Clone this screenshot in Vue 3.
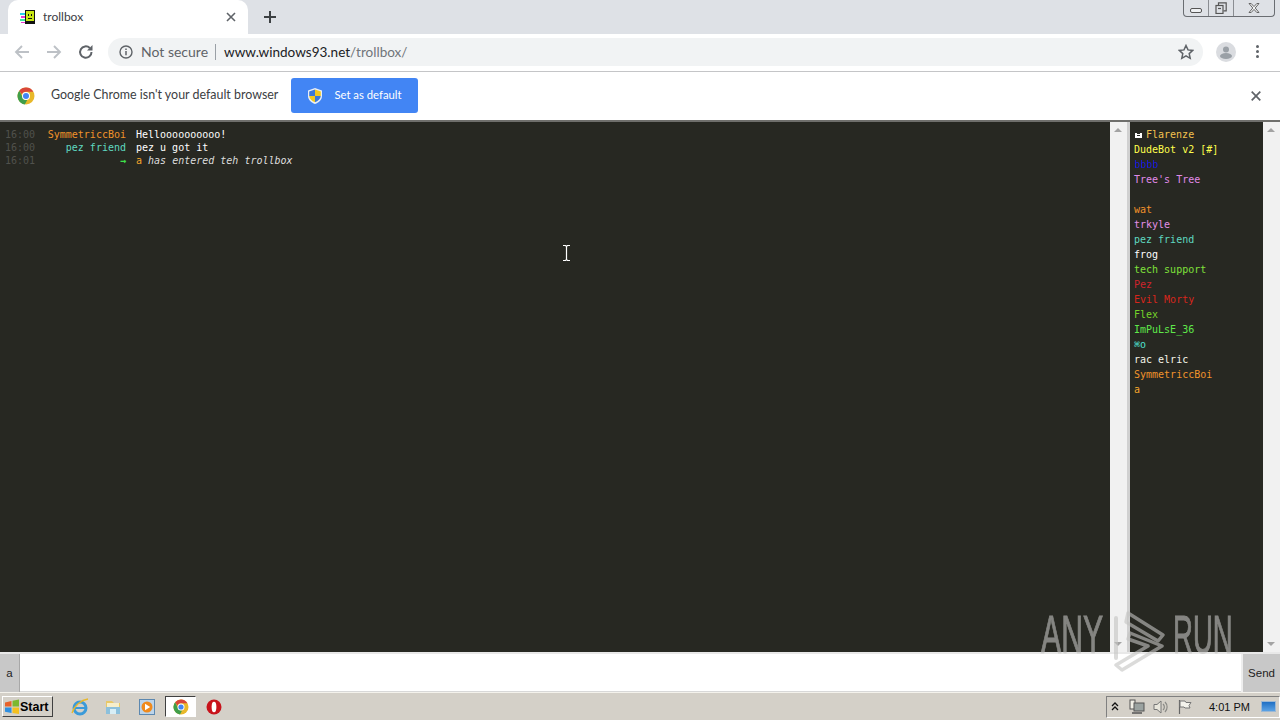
<script setup>
const rows = [
  { t: '16:00', n: 'SymmetriccBoi', c: '#f0932b', m: 'Helloooooooooo!' },
  { t: '16:00', n: 'pez friend', c: '#5fd8c0', m: 'pez u got it' },
]
const users = [
  { n: 'Flarenze', c: '#f2c14e', crown: true },
  { n: 'DudeBot v2 [#]', c: '#ffff4d' },
  { n: 'bbbb', c: '#1c1ce8', smudge: true },
  { n: "Tree's Tree", c: '#e08ae8' },
  { n: '\u00a0', c: '#fff' },
  { n: 'wat', c: '#f0902a' },
  { n: 'trkyle', c: '#e38fe6' },
  { n: 'pez friend', c: '#5fd8c0' },
  { n: 'frog', c: '#ffffff' },
  { n: 'tech support', c: '#7fe03a' },
  { n: 'Pez', c: '#d0242c' },
  { n: 'Evil Morty', c: '#d8261c' },
  { n: 'Flex', c: '#76d42a' },
  { n: 'ImPuLsE_36', c: '#5fe84a' },
  { n: '⌘o', c: '#4fe0d0' },
  { n: 'rac elric', c: '#f4f4e8' },
  { n: 'SymmetriccBoi', c: '#f0932b' },
  { n: 'a', c: '#f2a52c' },
]
</script>

<template>
  <div class="page">
    <div class="tabstrip">
      <div class="tab">
        <svg class="favicon" viewBox="0 0 16 16" width="16" height="16">
          <rect x="5" y="1" width="10" height="14" fill="#111" />
          <rect x="6" y="2" width="8" height="10" fill="#c8e614" />
          <rect x="8" y="5" width="1" height="2" fill="#111" />
          <rect x="11" y="5" width="1" height="2" fill="#111" />
          <rect x="8" y="9" width="4" height="1" fill="#111" />
          <rect x="0" y="4" width="5" height="2" fill="#2ad4e8" />
          <rect x="1" y="7" width="4" height="2" fill="#e83ad0" />
          <rect x="0" y="10" width="5" height="2" fill="#3ae8a0" />
          <rect x="1" y="13" width="4" height="1" fill="#e83ad0" />
        </svg>
        <span class="tab-title">trollbox</span>
        <svg class="tab-close" viewBox="0 0 10 10" width="10" height="10">
          <path d="M1 1 9 9M9 1 1 9" stroke="#5f6368" stroke-width="1.6" />
        </svg>
      </div>
      <svg class="new-tab" viewBox="0 0 12 12" width="12" height="12">
        <path d="M6 0v12M0 6h12" stroke="#3c4043" stroke-width="2" />
      </svg>
      <div class="win-controls">
        <div class="win-btn wb-min"><span class="min-bar"></span></div>
        <div class="win-btn wb-max">
          <svg viewBox="0 0 12 12" width="12" height="12" fill="none" stroke="#555" stroke-width="1.2">
            <rect x="1" y="3.5" width="7" height="8" fill="#dee1e6" />
            <path d="M3.5 3V.8h7.7v8H8.5" />
            <path d="M3 6.5h3" />
          </svg>
        </div>
        <div class="win-btn wb-close">
          <svg viewBox="0 0 12 10" width="12" height="10" fill="#f2f3f4" stroke="#666" stroke-width="1">
            <path d="M1 .5h2.200L6 3.600 8.800.5H11L7.200 5l3.800 4.500H8.800L6 6.400 3.200 9.500H1L4.800 5z" />
          </svg>
        </div>
      </div>
    </div>

    <div class="toolbar">
      <svg class="nav nav-back" viewBox="0 0 16 16" width="16" height="16">
        <path d="M15 8H2M8 2 2 8l6 6" fill="none" stroke="#bdc1c6" stroke-width="1.9" />
      </svg>
      <svg class="nav nav-fwd" viewBox="0 0 16 16" width="16" height="16">
        <path d="M1 8h13M8 2l6 6-6 6" fill="none" stroke="#bdc1c6" stroke-width="1.9" />
      </svg>
      <svg class="nav nav-reload" viewBox="0 0 16 16" width="16" height="16">
        <path d="M13.500 8a5.700 5.700 0 1 1-1.700-4" fill="none" stroke="#5f6368" stroke-width="2" />
        <path d="M14.500 1v5.500H9z" fill="#5f6368" />
      </svg>
      <div class="omnibox">
        <svg class="info" viewBox="0 0 14 14" width="14" height="14">
          <circle cx="7" cy="7" r="6" fill="none" stroke="#5f6368" stroke-width="1.400" />
          <path d="M7 6v4.200M7 3.500v1.400" stroke="#5f6368" stroke-width="1.500" />
        </svg>
        <span class="not-secure">Not secure</span>
        <span class="sep"></span>
        <span class="url">www.windows93.net<span class="url-dim">/trollbox/</span></span>
        <svg class="star" viewBox="0 0 16 16" width="16" height="16">
          <path d="M8 1.500l2 4.400 4.800.5-3.600 3.200 1 4.700L8 11.900l-4.200 2.400 1-4.700L1.200 6.400 6 5.900z" fill="none" stroke="#5f6368" stroke-width="1.500" />
        </svg>
      </div>
      <svg class="avatar" viewBox="0 0 20 20" width="20" height="20">
        <circle cx="10" cy="10" r="10" fill="#dadce0" />
        <circle cx="10" cy="7.500" r="3" fill="#9aa0a6" />
        <ellipse cx="10" cy="14" rx="6" ry="3" fill="#9aa0a6" />
      </svg>
      <div class="kebab"><i></i><i></i><i></i></div>
    </div>

    <div class="infobar">
      <svg class="chrome-logo" viewBox="0 0 18 18" width="18" height="18">
        <circle cx="9" cy="9" r="8.500" fill="#e8b82a" />
        <path d="M9 .5a8.500 8.500 0 0 1 7.400 4.300H9A4.200 4.200 0 0 0 5 7.600L2.300 3.800A8.500 8.500 0 0 1 9 .5z" fill="#d9463a" />
        <path d="M2.300 3.800 5.500 10a4.200 4.200 0 0 0 4.700 2.900L7.800 17.400A8.500 8.500 0 0 1 2.300 3.800z" fill="#3f9e4a" />
        <circle cx="9" cy="9" r="4" fill="#fff" />
        <circle cx="9" cy="9" r="3" fill="#4285f4" />
      </svg>
      <span class="info-text">Google Chrome isn't your default browser</span>
      <button class="default-btn">
        <svg viewBox="0 0 14 16" width="14" height="16">
          <path d="M7 0 14 2.500V8c0 4-3.500 6.700-7 8-3.500-1.300-7-4-7-8V2.500z" fill="#e8eef8" />
          <path d="M7 1.500 1.200 3.500V8H7z" fill="#3b78d8" />
          <path d="M7 1.500 12.800 3.500V8H7z" fill="#f2c81e" />
          <path d="M1.200 8H7v6.300C4 13 1.400 11 1.200 8z" fill="#f2c81e" />
          <path d="M12.800 8H7v6.300c3-1.300 5.600-3.300 5.800-6.300z" fill="#3b78d8" />
        </svg>
        <span class="btn-label">Set as default</span>
      </button>
      <svg class="info-close" viewBox="0 0 10 10" width="10" height="10">
        <path d="M.7.7l8.600 8.600M9.300.7.7 9.300" stroke="#5f6368" stroke-width="1.700" />
      </svg>
    </div>

    <div class="chat">
      <div class="messages">
        <div v-for="(r, i) in rows" :key="i" class="row">
          <span class="time">{{ r.t }}</span>
          <span class="nick" :style="{ color: r.c }">{{ r.n }}</span>
          <span class="msg">{{ r.m }}</span>
        </div>
        <div class="row">
          <span class="time">16:01</span>
          <span class="nick arrow">→</span>
          <span class="msg"><span class="who">a</span> <em>has entered teh trollbox</em></span>
        </div>
      </div>
      <div class="scrollbar">
        <span class="arrow-up"></span>
        <span class="arrow-down"></span>
      </div>
      <div class="users">
        <div v-for="(u, i) in users" :key="i" class="user" :style="{ color: u.c }">
          <svg v-if="u.crown" class="crown" viewBox="0 0 7 6" width="7" height="6">
            <path d="M0 1h2v1h3V1h2v5H0z" fill="#fff" />
            <rect x="2" y="3" width="3" height="1" fill="#272822" />
          </svg>
          <span :class="{ smudge: u.smudge }">{{ u.n }}</span>
        </div>
      </div>
      <div class="scrollbar">
        <span class="arrow-up"></span>
        <span class="arrow-down"></span>
      </div>
    </div>

    <div class="inputbar">
      <div class="me">a</div>
      <div class="field"></div>
      <div class="send">Send</div>
    </div>

    <div class="taskbar">
      <div class="start">
        <svg viewBox="0 0 16 16" width="16" height="16">
          <path d="M1 3.500 7.500 2v5.500H1z" fill="#e8622a" />
          <path d="M8.500 1.800 15 .5v7H8.500z" fill="#7cb82f" />
          <path d="M1 8.500h6.500V14L1 12.800z" fill="#2f8fe0" />
          <path d="M8.500 8.500H15v6.500l-6.500-1z" fill="#f4c01e" />
        </svg>
        <span>Start</span>
      </div>
      <svg class="tb-icon tb-ie" viewBox="0 0 18 18" width="18" height="18">
        <circle cx="9" cy="10" r="6" fill="none" stroke="#3a9ad9" stroke-width="3" />
        <path d="M4 10h10" stroke="#3a9ad9" stroke-width="2" />
        <path d="M1 15C3 8 10 2 17 1" fill="none" stroke="#e8b82a" stroke-width="1.300" />
      </svg>
      <svg class="tb-icon tb-folder" viewBox="0 0 18 18" width="18" height="18">
        <path d="M2 3h6l2 2h6v11H2z" fill="#e8c868" />
        <rect x="3" y="5" width="12" height="5" fill="#f6eecb" />
        <path d="M2 9h14v7H2z" fill="#8cc0dc" />
        <rect x="6" y="11" width="6" height="5" fill="#d8eef6" />
      </svg>
      <svg class="tb-icon tb-media" viewBox="0 0 16 16" width="16" height="16">
        <rect x=".5" y=".5" width="15" height="15" fill="#bcd4ea" stroke="#5c88b0" />
        <circle cx="8" cy="8" r="5.500" fill="#f08a1c" />
        <path d="M6 4.800 11.200 8 6 11.200z" fill="#fff" />
      </svg>
      <div class="tb-active">
        <svg viewBox="0 0 16 16" width="16" height="16">
          <circle cx="8" cy="8" r="7.500" fill="#e8b82a" />
          <path d="M8 .5a7.500 7.500 0 0 1 6.500 3.800H8A3.700 3.700 0 0 0 4.500 6.700L2.100 3.300A7.500 7.500 0 0 1 8 .5z" fill="#d9463a" />
          <path d="M2.100 3.300 4.900 8.800a3.700 3.700 0 0 0 4.200 2.600L7 15.400A7.500 7.500 0 0 1 2.100 3.300z" fill="#3f9e4a" />
          <circle cx="8" cy="8" r="3.500" fill="#fff" />
          <circle cx="8" cy="8" r="2.600" fill="#4285f4" />
        </svg>
      </div>
      <svg class="tb-icon tb-opera" viewBox="0 0 16 16" width="16" height="16">
        <circle cx="8" cy="8" r="7.500" fill="#c8131b" />
        <ellipse cx="8" cy="8" rx="2.400" ry="5.300" fill="#fff" />
      </svg>
      <div class="tray">
        <svg viewBox="0 0 8 9" width="8" height="9">
          <path d="M1 4 4 1l3 3M1 8l3-3 3 3" fill="none" stroke="#111" stroke-width="1.300" />
        </svg>
        <svg class="tray-net" viewBox="0 0 16 16" width="16" height="16">
          <rect x="1" y="1" width="5" height="9" fill="#f0efe6" stroke="#555" />
          <rect x="5" y="4" width="10" height="8" fill="#9aa2a0" stroke="#555" />
          <path d="M3 14h10" stroke="#555" stroke-width="1.500" />
        </svg>
        <svg class="tray-vol" viewBox="0 0 16 16" width="16" height="16">
          <path d="M1 5.500h3L8 2v12l-4-3.500H1z" fill="#e8e6dc" stroke="#777" />
          <path d="M10 5a4 4 0 0 1 0 6M12 3a7 7 0 0 1 0 10" fill="none" stroke="#8a8a86" stroke-width="1.200" />
        </svg>
        <svg class="tray-flag" viewBox="0 0 16 16" width="16" height="16">
          <path d="M2.500 1v14" stroke="#666" stroke-width="1.200" />
          <path d="M3 2h5l1 1.500h5l-2 3 1 2.500H8L7 8H3z" fill="#f4f3ec" stroke="#777" />
        </svg>
        <span class="clock">4:01 PM</span>
        <div class="show-desktop"></div>
      </div>
    </div>

    <div class="watermark">
      <span class="wm-any">ANY</span>
      <svg class="wm-logo" viewBox="0 0 60 66" width="60" height="66" fill="none" stroke="#c4c4c2" stroke-linejoin="round" stroke-linecap="round">
        <path d="M20 5 55 27 50 33 18 14z" stroke-width="3.500" />
        <path d="M22 25 54 38 14 62 8 57 40 38 20 31z" stroke-width="3.500" />
        <path d="M8 10V50" stroke-width="4" />
      </svg>
      <span class="wm-run">RUN</span>
    </div>

    <svg class="ibeam" viewBox="0 0 7 16" width="7" height="16">
      <path d="M0 .5h2.500L3.500 1.500 4.500.5H7M3.500 1.500v13M0 15.500h2.500l1-1 1 1H7" fill="none" stroke="#fff" stroke-width="1.200" />
    </svg>
  </div>
</template>

<style scoped>
.page {
  position: relative;
  width: 1280px;
  height: 720px;
  overflow: hidden;
  display: flex;
  flex-direction: column;
  background: #fff;
  font-family: "Lato", "Open Sans", "Liberation Sans", sans-serif;
}
.tabstrip {
  height: 34px;
  flex: none;
  display: flex;
  background: #dee1e6;
}
.tab {
  width: 240px;
  margin-left: 8px;
  background: #fff;
  border-top-right-radius: 10px;
  border-top-left-radius: 10px;
  display: flex;
  align-items: center;
  padding: 0 0 1px 12px;
  box-sizing: border-box;
}
.tab-title {
  margin-left: 7px;
  font-size: 12px;
  color: #3c4043;
  flex: 1;
}
.tab-close { margin-right: 12px; }
.new-tab { margin: 11px 0 0 16px; }
.win-controls {
  margin-left: auto;
  margin-right: 5px;
  height: 16px;
  display: flex;
  border: 1px solid #6a6d72;
  border-top: none;
  border-radius: 0 0 4px 4px;
}
.win-btn {
  display: flex;
  align-items: center;
  justify-content: center;
  box-sizing: border-box;
}
.wb-min { width: 25px; border-right: 1px solid #8a8d92; }
.wb-max { width: 25px; border-right: 1px solid #8a8d92; }
.wb-close { width: 40px; }
.min-bar {
  width: 12px;
  height: 5px;
  box-sizing: border-box;
  border: 1px solid #555;
  border-radius: 2px;
  background: #eef0f2;
  margin-top: 5px;
}
.toolbar {
  height: 35px;
  padding-bottom: 2px;
  flex: none;
  display: flex;
  align-items: center;
  background: #fff;
  border-bottom: 1px solid #c4c5c7;
}
.nav { flex: none; }
.nav-back { margin-left: 14px; }
.nav-fwd { margin-left: 16px; }
.nav-reload { margin-left: 16px; }
.omnibox {
  margin-left: 14px;
  width: 1095px;
  height: 28px;
  box-sizing: border-box;
  border-radius: 14px;
  background: #f1f3f4;
  display: flex;
  align-items: center;
  padding-left: 11px;
  padding-right: 9px;
}
.not-secure {
  margin-left: 8px;
  font-size: 14px;
  color: #5f6368;
}
.sep {
  width: 1px;
  height: 16px;
  background: #9aa0a6;
  margin: 0 8px 0 7px;
}
.url {
  font-size: 13.550px;
  color: #202124;
  flex: 1;
}
.url-dim { color: #70757a; }
.avatar { margin-left: 13px; flex: none; }
.kebab {
  margin-left: 20px;
  display: flex;
  flex-direction: column;
  gap: 2px;
}
.kebab i {
  display: block;
  width: 3px;
  height: 3px;
  border-radius: 50%;
  background: #5f6368;
}
.infobar {
  height: 47px;
  padding: 0 0 1px 17px;
  flex: none;
  display: flex;
  align-items: center;
  background: #fff;
}
.info-text {
  margin: 0 0 2px 16px;
  font-size: 12.450px;
  color: #3c4043;
}
.default-btn {
  margin-left: 13px;
  width: 127px;
  height: 35px;
  border: none;
  border-radius: 3px;
  background: #4285f4;
  color: #fff;
  font-family: inherit;
  font-size: 11.300px;
  display: flex;
  align-items: center;
  gap: 12px;
  padding: 0 0 0 17px;
}
.btn-label { margin-bottom: 2px; }
.info-close { margin-left: auto; margin-right: 19px; }
.chat {
  flex: 1;
  min-height: 0;
  display: flex;
  background: #272822;
  border-top: 2px solid #6f6f6c;
  font-family: "DejaVu Sans Mono", "Liberation Mono", monospace;
  font-size: 10px;
}
.messages {
  flex: 1;
  padding: 6px 0 0 5px;
}
.row {
  display: flex;
  height: 13px;
  line-height: 13px;
  white-space: pre;
}
.time { width: 30px; color: #50514c; }
.nick { width: 91px; text-align: right; }
.arrow { color: #3ee04a; font-weight: 700; }
.msg { margin-left: 10px; color: #fff; }
.who { color: #f2a52c; }
.msg em { color: #ddd; font-style: italic; }
.scrollbar {
  width: 17px;
  flex: none;
  background: #f1f1f1;
  position: relative;
}
.arrow-up, .arrow-down {
  position: absolute;
  left: 4px;
  width: 0;
  height: 0;
  border-left: 4px solid transparent;
  border-right: 4px solid transparent;
}
.arrow-up { top: 6px; border-bottom: 4px solid #a3a3a3; }
.arrow-down { bottom: 6px; border-top: 4px solid #a3a3a3; }
.users {
  width: 136px;
  flex: none;
  box-sizing: border-box;
  padding: 5px 0 0 4px;
  border-left: 3px solid #d0d0d0;
}
.user {
  height: 15px;
  line-height: 15px;
  white-space: pre;
  display: flex;
  align-items: center;
  gap: 4px;
}
.crown { margin-left: 1px; }
.smudge { filter: blur(.6px); }
.inputbar {
  height: 40px;
  flex: none;
  display: flex;
  background: #fff;
  border-top: 2px solid #e8e8e8;
  box-sizing: border-box;
}
.me {
  width: 20px;
  flex: none;
  background: #c8c8c8;
  border-right: 1px solid #a8a8a8;
  box-sizing: border-box;
  display: flex;
  align-items: center;
  justify-content: center;
  padding-bottom: 1px;
  font: 11.500px "Liberation Sans", sans-serif;
  color: #222;
}
.field { flex: 1; border-bottom: 1px solid #d8d8d8; }
.send {
  width: 39px;
  flex: none;
  background: #c8c8c8;
  border-left: 2px solid #eee;
  box-sizing: border-box;
  display: flex;
  align-items: center;
  justify-content: center;
  padding-bottom: 1px;
  font: 11.500px "Liberation Sans", sans-serif;
  color: #222;
}
.taskbar {
  height: 28px;
  flex: none;
  display: flex;
  align-items: center;
  background: #d4d0c8;
  border-top: 1px solid #f4f2ec;
  box-sizing: border-box;
  font-family: "Liberation Sans", sans-serif;
}
.start {
  margin-left: 2px;
  width: 51px;
  height: 21px;
  box-sizing: border-box;
  display: flex;
  align-items: center;
  padding-left: 1px;
  border: 1px solid;
  border-color: #fff #404040 #404040 #fff;
  font-size: 12.500px;
  font-weight: 700;
  color: #000;
}
.tb-icon { flex: none; }
.tb-ie { margin-left: 18px; }
.tb-folder { margin-left: 15px; }
.tb-media { margin-left: 17px; }
.tb-active {
  margin-left: 10px;
  width: 31px;
  height: 21px;
  box-sizing: border-box;
  background: #fff;
  border: 1px solid;
  border-color: #404040 #fff #fff #404040;
  display: flex;
  align-items: center;
  justify-content: center;
}
.tb-opera { margin-left: 10px; }
.tray {
  margin-left: auto;
  width: 174px;
  height: 22px;
  box-sizing: border-box;
  display: flex;
  align-items: center;
  border: 1px solid;
  border-color: #808080 #fff #fff #808080;
  padding-left: 4px;
}
.tray-net { margin-left: 10px; }
.tray-vol { margin-left: 8px; }
.tray-flag { margin-left: 8px; }
.clock {
  margin-left: 16px;
  font-size: 11px;
  color: #111;
  white-space: nowrap;
}
.show-desktop {
  margin-left: 11px;
  width: 15px;
  height: 11px;
  background: linear-gradient(#1f6fc4, #5ba2e4);
  border: 1px solid #9cb8d4;
  box-sizing: border-box;
}
.watermark {
  position: absolute;
  left: 1041px;
  top: 608px;
  display: flex;
  align-items: center;
  opacity: .6;
  font-family: "Liberation Sans", sans-serif;
  font-size: 53px;
  line-height: 1;
  color: #c4c4c2;
  -webkit-text-stroke: 1px #c4c4c2;
  pointer-events: none;
}
.wm-any, .wm-run {
  display: inline-block;
  transform-origin: left center;
  margin-top: -14px;
}
.wm-any { width: 67px; transform: scaleX(.57); }
.wm-logo { flex: none; }
.wm-run { margin-left: 5px; width: 62px; transform: scaleX(.52); }
.ibeam { position: absolute; left: 563px; top: 245px; }
</style>
